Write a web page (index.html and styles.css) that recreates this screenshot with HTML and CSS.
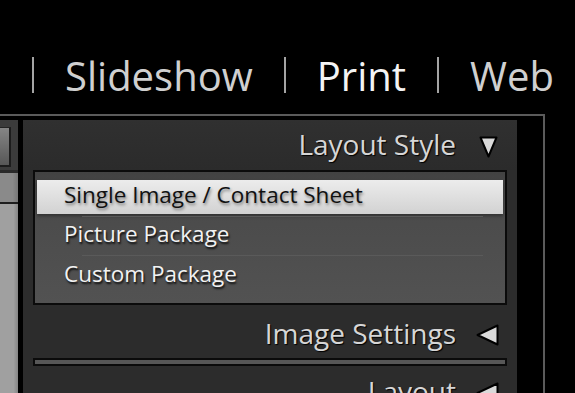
FILE: index.html
```html
<!DOCTYPE html>
<html>
<head>
<meta charset="utf-8">
<link rel="stylesheet" href="styles.css">
</head>
<body>
<nav class="nav">
  <span class="nav-sep"></span>
  <span class="nav-item">Slideshow</span>
  <span class="nav-sep"></span>
  <span class="nav-item nav-active">Print</span>
  <span class="nav-sep"></span>
  <span class="nav-item">Web</span>
</nav>
<main class="main">
  <aside class="strip">
    <div class="strip-top"><div class="strip-box"></div></div>
    <div class="strip-line"></div>
    <div class="strip-mid"></div>
    <div class="strip-sep"></div>
    <div class="strip-bot"></div>
  </aside>
  <section class="panel">
    <div class="head head-first">
      <span class="head-title">Layout Style</span>
      <svg class="tri tri-down" width="19" height="22" viewBox="0 0 19 22"><polygon points="1.5,1.5 17.5,1.5 9.5,20.5" fill="#d9d9d9" stroke="#000" stroke-width="2" stroke-linejoin="round"/></svg>
    </div>
    <div class="box">
      <div class="item item-sel">Single Image / Contact Sheet</div>
      <div class="rule"></div>
      <div class="item">Picture Package</div>
      <div class="rule rule-last"></div>
      <div class="item">Custom Package</div>
    </div>
    <div class="head head-second">
      <span class="head-title">Image Settings</span>
      <svg class="tri tri-left" width="23" height="22" viewBox="0 0 23 22"><polygon points="1.5,11 21.5,1.5 21.5,20.5" fill="#d9d9d9" stroke="#000" stroke-width="2" stroke-linejoin="round"/></svg>
    </div>
    <div class="collapsed"></div>
    <div class="head head-third">
      <span class="head-title">Layout</span>
      <svg class="tri tri-left" width="23" height="22" viewBox="0 0 23 22"><polygon points="1.5,11 21.5,1.5 21.5,20.5" fill="#d9d9d9" stroke="#000" stroke-width="2" stroke-linejoin="round"/></svg>
    </div>
  </section>
</main>
</body>
</html>
```
FILE: styles.css
```css
html, body {
  margin: 0;
  padding: 0;
  background: #000;
}
body {
  width: 575px;
  height: 393px;
  overflow: hidden;
  font-family: "Open Sans", "DejaVu Sans", sans-serif;
}
.nav {
  height: 114px;
  box-sizing: border-box;
  padding: 52px 0 0 32px;
  display: flex;
  align-items: flex-start;
  white-space: nowrap;
  font-size: 40px;
  line-height: 48px;
  color: #d0d0d0;
}
.nav-item {
  padding: 0 31px;
}
.nav-active {
  color: #f4f4f4;
}
.nav-sep {
  width: 2px;
  height: 36px;
  margin-top: 5px;
  background: #a4a4a4;
  flex: none;
}
.main {
  width: 545px;
  height: 279px;
  box-sizing: border-box;
  border-top: 2px solid #5b5b5b;
  border-right: 2px solid #5b5b5b;
  padding-top: 4px;
  display: flex;
  align-items: stretch;
  overflow: hidden;
}
.strip {
  width: 18px;
  flex: none;
  display: flex;
  flex-direction: column;
}
.strip > div {
  flex-shrink: 0;
}
.strip-top {
  height: 50px;
  background: #3b3b3b;
  padding-top: 7px;
  box-sizing: border-box;
}
.strip-box {
  width: 9px;
  height: 37px;
  border-top: 1px solid #242424;
  border-right: 2px solid #1c1c1c;
  border-bottom: 2px solid #1c1c1c;
  background: linear-gradient(#858585, #575757);
}
.strip-line {
  height: 3px;
  background: #2a2a2a;
}
.strip-mid {
  height: 29px;
  background: linear-gradient(90deg, #8a8a8a 70%, #777 100%);
}
.strip-sep {
  height: 2px;
  background: #1e1e1e;
}
.strip .strip-bot {
  flex: 1 0 auto;
  background: linear-gradient(90deg, #a0a0a0 75%, #858585 100%);
}
.panel {
  width: 494px;
  flex: none;
  margin-left: 5px;
  background: #2c2c2c;
  display: flex;
  flex-direction: column;
  overflow: hidden;
}
.panel > * {
  flex-shrink: 0;
}
.head {
  display: flex;
  justify-content: flex-end;
  align-items: flex-start;
  font-size: 28px;
  line-height: 34px;
  color: #d6d6d6;
  text-shadow: 1px 1px 1px #000;
  white-space: nowrap;
}
.head-first {
  height: 50px;
  box-sizing: border-box;
  padding-top: 7px;
  background: linear-gradient(#303030, #2b2b2b);
}
.head-second {
  height: 53px;
  box-sizing: border-box;
  padding-top: 11px;
}
.head-third {
  padding-top: 8px;
}
.tri {
  flex: none;
  display: block;
}
.tri-down {
  margin: 9px 19px 0 23px;
}
.tri-left {
  margin: 8px 18px 0 20px;
}
.box {
  margin: 0 10px;
  border: 2px solid #0b0b0b;
  background: linear-gradient(#424242, #4b4b4b 30%, #525252);
  padding: 8px 2px 10px;
  font-size: 22.5px;
}
.item {
  height: 34px;
  box-sizing: border-box;
  line-height: 30px;
  padding: 0 0 4px 27px;
  color: #f2f2f2;
  text-shadow: 1px 2px 2px rgba(0, 0, 0, 0.85);
  white-space: nowrap;
}
.item-sel {
  background: linear-gradient(#ececec, #d2d2d2);
  color: #111;
  text-shadow: 1px 2px 3px rgba(0, 0, 0, 0.45);
  box-shadow: 0 2px 3px rgba(0, 0, 0, 0.35);
}
.rule {
  height: 1px;
  margin: 2px 20px 2px 45px;
  background: #5a5a5a;
}
.rule-last {
  margin-bottom: 3px;
}
.collapsed {
  margin: 0 10px;
  height: 4px;
  border: 2px solid #0b0b0b;
  background: #575757;
}
```
